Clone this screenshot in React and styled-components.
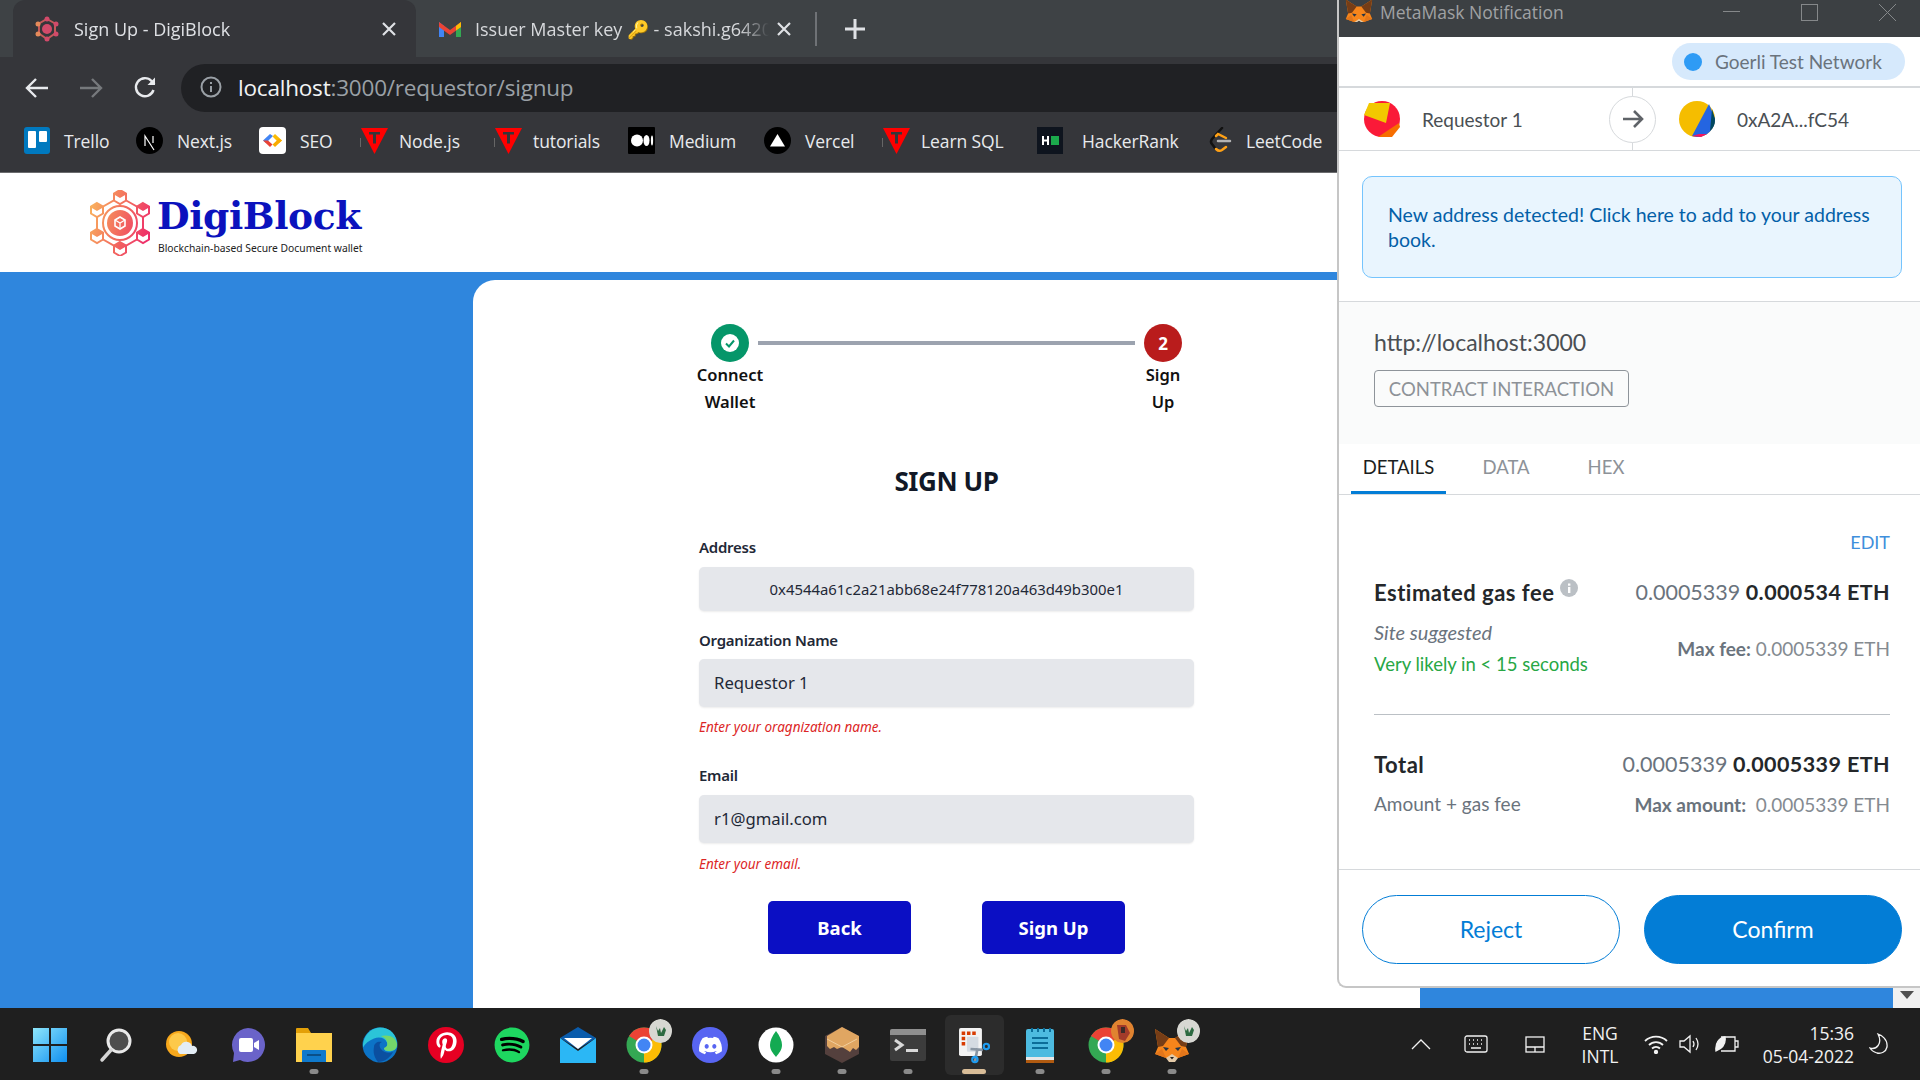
import React from "react"
import styled, { createGlobalStyle } from "styled-components"
import { FaDiscord, FaPinterestP, FaSpotify } from "react-icons/fa"

const GlobalStyle = createGlobalStyle`
  html, body { margin: 0; padding: 0; background: #fff; }
  * { box-sizing: border-box; }
`

const Desktop = styled.div`
  position: relative;
  width: 1920px;
  height: 1080px;
  overflow: hidden;
  display: flex;
  flex-direction: column;
  font-family: "Open Sans", sans-serif;
`

/* ---------- browser chrome ---------- */
const Chrome = styled.div`
  height: 173px;
  background: #35363a;
  border-bottom: 1px solid #6b6c6e;
  flex-shrink: 0;
`
const TabStrip = styled.div`
  height: 57px;
  background: #3e4245;
  display: flex;
  padding-left: 13px;
  align-items: stretch;
`
const Tab = styled.div`
  width: ${p => p.$w}px;
  display: flex;
  align-items: center;
  padding: 0 ${p => p.$right}px 0 22px;
  border-top-left-radius: 12px;
  border-top-right-radius: 12px;
  background: ${p => (p.$active ? "#35363a" : "transparent")};
  color: ${p => (p.$active ? "#dfe1e5" : "#d7d9dc")};
  font-size: 18px;
`
const TabTitle = styled.span`
  flex: 1;
  margin-left: ${p => p.$gap}px;
  margin-right: 8px;
  white-space: nowrap;
  overflow: hidden;
  -webkit-mask-image: linear-gradient(90deg, #000 90%, transparent);
  mask-image: linear-gradient(90deg, #000 90%, transparent);
`
const TabSep = styled.div`
  width: 2px;
  height: 34px;
  align-self: center;
  background: #6f7276;
`
const NewTab = styled.div`
  margin-left: 28px;
  display: flex;
  align-items: center;
`
const NavBar = styled.div`
  height: 55px;
  display: flex;
  align-items: center;
  padding: 7px 0 0 25px;
`
const NavButton = styled.div`
  width: ${p => p.$w || 54}px;
  display: flex;
  align-items: center;
`
const UrlBar = styled.div`
  flex: 1;
  height: 48px;
  background: #202124;
  border-radius: 24px 0 0 24px;
  display: flex;
  align-items: center;
  padding: 0 0 2px 19px;
  font-size: 22.5px;
  letter-spacing: -0.2px;
  color: #9aa0a6;
`
const UrlHost = styled.span`
  color: #f1f3f4;
  margin-left: 16px;
`
const BookmarkBar = styled.div`
  height: 60px;
  display: flex;
  align-items: center;
  padding-left: 24px;
  padding-bottom: 3px;
`
const Bookmark = styled.div`
  width: ${p => p.$w}px;
  flex-shrink: 0;
  display: flex;
  align-items: center;
  gap: ${p => p.$gap || 14}px;
  color: #e8eaed;
  font-size: 17.5px;
  letter-spacing: -0.1px;
  white-space: nowrap;
`

/* ---------- page ---------- */
const Viewport = styled.div`
  flex: 1;
  display: flex;
  min-height: 0;
`
const Page = styled.div`
  flex: 1;
  display: flex;
  flex-direction: column;
`
const Scrollbar = styled.div`
  width: 27px;
  background: #f1f1f1;
  display: flex;
  align-items: flex-end;
  justify-content: center;
  padding-bottom: 9px;
`
const SiteHeader = styled.header`
  height: 99px;
  background: #fff;
  display: flex;
  align-items: center;
  padding: 1px 0 0 88px;
  flex-shrink: 0;
`
const LogoText = styled.div`
  margin-left: 5px;
  display: flex;
  flex-direction: column;
`
const LogoName = styled.div`
  font-family: "DejaVu Serif", serif;
  font-weight: 700;
  font-size: 37.6px;
  line-height: 46px;
  letter-spacing: -0.4px;
  color: #0b12bd;
`
const LogoTag = styled.div`
  font-family: "Noto Sans", sans-serif;
  font-size: 10.3px;
  line-height: 12px;
  margin-top: 3px;
  margin-left: 1px;
  color: #222;
  white-space: nowrap;
`
const BlueArea = styled.main`
  flex: 1;
  background: #2f86dd;
  padding: 8px 0 0 473px;
  min-height: 0;
`
const Card = styled.section`
  width: 947px;
  height: 100%;
  background: #fff;
  border-top-left-radius: 22px;
  border-top-right-radius: 22px;
  font-family: "Noto Sans", sans-serif;
  color: #111827;
  padding-top: 44px;
`
const Stepper = styled.div`
  width: 521px;
  margin-left: 213px;
  display: flex;
  align-items: flex-start;
`
const Step = styled.div`
  width: 88px;
  display: flex;
  flex-direction: column;
  align-items: center;
  font-weight: 600;
  font-size: 16.5px;
  line-height: 27px;
  margin-top: 0;
  text-align: center;
  color: #111;
`
const StepDot = styled.div`
  width: 38px;
  height: 38px;
  border-radius: 50%;
  background: ${p => p.$bg};
  color: #fff;
  display: flex;
  align-items: center;
  justify-content: center;
  font-weight: 700;
  font-size: 17px;
  margin-bottom: -1px;
`
const StepLine = styled.div`
  flex: 1;
  height: 4px;
  margin: 17px -16px 0;
  background: #9ca3af;
`
const Heading = styled.h1`
  margin: 48px 0 0;
  text-align: center;
  font-size: 26px;
  line-height: 36px;
  letter-spacing: -0.4px;
  font-weight: 700;
  color: #111827;
`
const Form = styled.form`
  width: 495px;
  margin: 38px 0 0 226px;
  display: flex;
  flex-direction: column;
`
const Label = styled.label`
  font-size: 15px;
  font-weight: 600;
  letter-spacing: -0.25px;
  line-height: 20px;
  color: #1f2937;
  margin-top: ${p => p.$top || 0}px;
  margin-bottom: ${p => p.$bottom || 9}px;
`
const Input = styled.div`
  height: ${p => p.$h || 48}px;
  background: #e5e7eb;
  border-radius: 5px;
  box-shadow: 0 1px 2px rgba(0, 0, 0, 0.08);
  display: flex;
  align-items: center;
  justify-content: ${p => (p.$center ? "center" : "flex-start")};
  padding: 0 15px 1px;
  font-size: ${p => (p.$center ? 14.9 : 16.7)}px;
  color: #1f2937;
`
const ErrorText = styled.p`
  margin: ${p => p.$top || 11}px 0 0;
  font-size: 13.5px;
  line-height: 18px;
  font-style: italic;
  color: #dc2626;
`
const Actions = styled.div`
  display: flex;
  justify-content: center;
  gap: 71px;
  margin-top: 28px;
`
const BlueButton = styled.div`
  width: 143px;
  height: 53px;
  border-radius: 5px;
  background: #0b0fc4;
  color: #fff;
  font-weight: 700;
  font-size: 18.5px;
  display: flex;
  align-items: center;
  justify-content: center;
`

/* ---------- metamask popup ---------- */
const Popup = styled.aside`
  position: absolute;
  left: 1337px;
  top: 0;
  width: 583px;
  height: 988px;
  background: #fff;
  border-left: 2px solid #c6c6c6;
  border-bottom: 2px solid #c6c6c6;
  border-bottom-left-radius: 9px;
  display: flex;
  flex-direction: column;
  font-family: "Lato", sans-serif;
  color: #24272a;
  overflow: hidden;
`
const TitleBar = styled.div`
  height: 37px;
  flex-shrink: 0;
  background: #3c4043;
  display: flex;
  align-items: flex-start;
  padding-left: 6px;
  color: #a0a2a4;
  font-family: "Open Sans", sans-serif;
  font-size: 17.5px;
  line-height: 24px;
`
const FoxClip = styled.div`
  height: 24px;
  overflow: hidden;
  margin-top: -2px;
`
const TitleText = styled.span`
  margin-left: 7px;
  flex: 1;
`
const WinButton = styled.div`
  width: 78px;
  height: 24px;
  padding-left: 12px;
  display: flex;
  align-items: center;
  justify-content: center;
`
const NetworkRow = styled.div`
  height: 51px;
  flex-shrink: 0;
  display: flex;
  justify-content: flex-end;
  align-items: center;
  padding-right: 15px;
  border-bottom: 2px solid #d6d9dc;
`
const NetworkPill = styled.div`
  width: 233px;
  height: 37px;
  border-radius: 19px;
  background: #d6e9fc;
  display: flex;
  align-items: center;
  padding-left: 12px;
  gap: 13px;
  color: #6a737d;
  font-size: 19px;
`
const NetworkDot = styled.span`
  width: 18px;
  height: 18px;
  border-radius: 50%;
  background: #2e9bf5;
`
const AccountRow = styled.div`
  height: 63px;
  flex-shrink: 0;
  display: flex;
  border-bottom: 1px solid #d6d9dc;
  font-size: 19px;
  color: #4a4f54;
`
const AccountSide = styled.div`
  display: flex;
  align-items: center;
  width: ${p => p.$w}px;
  padding-left: ${p => p.$pad}px;
  gap: 22px;
`
const ArrowCircle = styled.div`
  width: 47px;
  height: 47px;
  flex-shrink: 0;
  align-self: center;
  border-radius: 50%;
  border: 1px solid #d6d9dc;
  background: #fff;
  display: flex;
  align-items: center;
  justify-content: center;
`
const ArrowColumn = styled.div`
  width: 1px;
  display: flex;
  justify-content: center;
  background: #d6d9dc;
`
const AlertWrap = styled.div`
  height: 151px;
  flex-shrink: 0;
  padding: 25px 18px 0 23px;
  border-bottom: 1px solid #d6d9dc;
`
const Alert = styled.div`
  height: 102px;
  border: 1px solid #75c4fd;
  border-radius: 10px;
  background: #e9f5fe;
  color: #0360a8;
  padding: 25px 20px 0 25px;
  font-size: 19.5px;
  line-height: 25px;
`
const OriginBlock = styled.div`
  height: 142px;
  flex-shrink: 0;
  background: #fafbfb;
  padding: 26px 0 0 35px;
`
const Origin = styled.div`
  font-size: 23px;
  line-height: 28px;
  color: #4a4f54;
`
const Tag = styled.div`
  margin-top: 14px;
  width: 255px;
  height: 37px;
  border: 1px solid #8e949a;
  border-radius: 4px;
  color: #8d9298;
  font-size: 18.5px;
  display: flex;
  align-items: center;
  justify-content: center;
`
const TabsRow = styled.div`
  height: 51px;
  flex-shrink: 0;
  display: flex;
  padding-left: 12px;
  border-bottom: 1px solid #d6d9dc;
`
const DetailTab = styled.div`
  width: ${p => p.$w}px;
  margin-right: ${p => p.$gap}px;
  height: 50px;
  display: flex;
  align-items: center;
  justify-content: center;
  font-size: 18.5px;
  padding-bottom: 1px;
  color: ${p => (p.$active ? "#1b1e21" : "#8d9298")};
  border-bottom: 3px solid ${p => (p.$active ? "#037dd6" : "transparent")};
`
const Details = styled.div`
  padding: 35px 30px 0 35px;
  display: flex;
  flex-direction: column;
`
const EditLink = styled.div`
  align-self: flex-end;
  font-size: 18px;
  line-height: 24px;
  color: #3f8fdc;
`
const FeeRow = styled.div`
  display: flex;
  justify-content: space-between;
  align-items: center;
  height: 24px;
  margin-top: ${p => p.$top}px;
`
const FeeTitle = styled.div`
  font-size: 22px;
  font-weight: 700;
  letter-spacing: 0.5px;
  color: #24272a;
  display: flex;
  align-items: flex-start;
  gap: 6px;
`
const FeeValue = styled.div`
  font-size: 21.5px;
  color: #6a737d;
  white-space: pre;
`
const Strong = styled.span`
  font-weight: 700;
  letter-spacing: 0.4px;
  color: #24272a;
`
const SubRow = styled.div`
  display: flex;
  justify-content: space-between;
  align-items: center;
  margin-top: 12px;
`
const SubLine = styled.div`
  font-size: ${p => p.$size || 18.5}px;
  line-height: 32px;
  font-style: ${p => (p.$italic ? "italic" : "normal")};
  color: ${p => p.$color || "#6a737d"};
`
const MaxText = styled.div`
  font-size: 19px;
  color: #858b91;
  white-space: pre;
`
const MaxLabel = styled.span`
  font-weight: 700;
  color: #6a737d;
`
const Rule = styled.div`
  height: 1px;
  background: #bbc0c5;
  margin-top: 34px;
`
const Footer = styled.div`
  margin-top: auto;
  height: 117px;
  border-top: 1px solid #d6d9dc;
  padding: 25px 18px 0 23px;
  display: flex;
  gap: 24px;
`
const PillButton = styled.div`
  flex: 1;
  height: 69px;
  border-radius: 35px;
  border: 1px solid #037dd6;
  background: ${p => (p.$primary ? "#037dd6" : "#fff")};
  color: ${p => (p.$primary ? "#fff" : "#037dd6")};
  font-size: 23px;
  padding-bottom: 1px;
  display: flex;
  align-items: center;
  justify-content: center;
`

/* ---------- taskbar ---------- */
const Taskbar = styled.footer`
  height: 72px;
  flex-shrink: 0;
  background: #1f1f1f;
  display: flex;
  padding-left: 17px;
`
const TaskItem = styled.div`
  position: relative;
  width: 66px;
  height: 72px;
  display: flex;
  align-items: flex-start;
  justify-content: center;
  padding-top: 19px;
`
const ActiveBack = styled.div`
  position: absolute;
  left: 4px;
  right: 3px;
  top: 7px;
  bottom: 5px;
  background: #2c2c2c;
  border-radius: 6px;
`
const IconLayer = styled.div`
  position: relative;
  display: flex;
`
const TaskIndicator = styled.div`
  position: absolute;
  left: 50%;
  bottom: 6px;
  transform: translateX(-50%);
  width: ${p => (p.$active ? 24 : 9)}px;
  height: 5px;
  border-radius: 3px;
  background: ${p => (p.$active ? "#d9bd98" : "#8a8a8a")};
`
const Tray = styled.div`
  margin-left: auto;
  display: flex;
  align-items: center;
  color: #f2f2f2;
  font-family: "Open Sans", sans-serif;
  padding-right: 16px;
`
const TrayIcon = styled.div`
  width: ${p => p.$w}px;
  display: flex;
  justify-content: center;
`
const TrayText = styled.div`
  font-size: 17.5px;
  line-height: 23px;
  padding-top: 2px;
  text-align: ${p => p.$align};
  width: ${p => p.$w}px;
  white-space: nowrap;
`
const BadgeWrap = styled.div`
  position: absolute;
  left: 38px;
  top: 11px;
  width: 23px;
  height: 24px;
  border-radius: 50%;
  overflow: hidden;
`
const PinCircle = styled.div`
  width: 36px;
  height: 36px;
  border-radius: 50%;
  background: #e60023;
  display: flex;
  align-items: center;
  justify-content: center;
`
const DiscordCircle = styled(PinCircle)`
  background: #5865f2;
`
const SpotifyWrap = styled.div`
  width: 36px;
  height: 36px;
  background: radial-gradient(circle, #000 60%, transparent 61%);
  display: flex;
`

/* ---------- drawings ---------- */
const DigiLogo = () => {
  const nodes = [[32, 7], [55, 20], [55, 46], [32, 59], [9, 46], [9, 20]]
  return (
    <svg width="64" height="66" viewBox="0 0 64 66">
      <defs>
        <linearGradient id="dg" gradientUnits="userSpaceOnUse" x1="0" y1="20" x2="64" y2="40">
          <stop offset="0" stopColor="#f9b35d" />
          <stop offset="0.55" stopColor="#f2685f" />
          <stop offset="1" stopColor="#ee2a6b" />
        </linearGradient>
      </defs>
      <g fill="none" stroke="url(#dg)" strokeWidth="2">
        <path d="M32 7 55 20V46L32 59 9 46V20Z" />
        <circle cx="32" cy="33" r="17" />
      </g>
      <circle cx="32" cy="33" r="13" fill="url(#dg)" />
      <path d="M32 27l5 3v6l-5 3-5-3v-6z" fill="none" stroke="#fff" strokeWidth="1.6" />
      <path d="M27 30l5 3 5-3M32 33v6" fill="none" stroke="#fff" strokeWidth="1.2" />
      {nodes.map(([x, y]) => (
        <g key={x + "-" + y}>
          <path d={`M${x} ${y - 7}l6 3.5v7l-6 3.5-6-3.5v-7z`} fill="#fff" stroke="url(#dg)" strokeWidth="2" />
          <path d={`M${x - 6} ${y - 3.5}l6 3.5 6-3.5`} fill="none" stroke="url(#dg)" strokeWidth="1.6" />
          <path d={`M${x} ${y - 7}l6 3.5-6 3.5-6-3.5z`} fill="url(#dg)" />
        </g>
      ))}
    </svg>
  )
}

const Fox = ({ size }) => (
  <svg width={size} height={size} viewBox="0 0 36 36">
    <path d="M1 2 15 11H21L35 2 32 20 35 27 24 31H12L1 27 4 20Z" fill="#f6851b" />
    <path d="M1 2 15 11 9 19 4 20Z" fill="#763d16" />
    <path d="M35 2 21 11 27 19 32 20Z" fill="#763d16" />
    <path d="M12 31 18 27 24 31 21 35H15Z" fill="#e4caa8" />
    <path d="M16 30h4l-2 2.5z" fill="#222" />
    <path d="M9 20l6 1-3 3zM27 20l-6 1 3 3z" fill="#233447" />
    <path d="M1 27 12 31 8 22zM35 27 24 31 28 22z" fill="#e2761b" />
  </svg>
)

const ChromeIcon = ({ size }) => (
  <svg width={size} height={size} viewBox="0 0 36 36">
    <circle cx="18" cy="18" r="17.5" fill="#34a853" />
    <path d="M18 .5A17.5 17.5 0 0 1 33.2 9.3L18 18 3 9A17.5 17.5 0 0 1 18 .5z" fill="#ea4335" />
    <path d="M33.2 9.3A17.5 17.5 0 0 1 18 35.5L18 18z" fill="#fbbc04" />
    <circle cx="18" cy="18" r="8.5" fill="#fff" />
    <circle cx="18" cy="18" r="6.5" fill="#4285f4" />
  </svg>
)

const PlantBadge = () => (
  <BadgeWrap>
    <svg width="23" height="24" viewBox="0 0 23 24">
      <circle cx="11.5" cy="12" r="12" fill="#d7d7d2" />
      <path d="M7 7l2 5 2-3 1 5 3-6 2 3-2 6H9z" fill="#2d6a41" />
    </svg>
  </BadgeWrap>
)
const PhotoBadge = () => (
  <BadgeWrap>
    <svg width="23" height="24" viewBox="0 0 23 24">
      <circle cx="11.5" cy="12" r="12" fill="#e08330" />
      <path d="M6 6h9l4 8-5 8-6-2z" fill="#a23b2a" />
      <path d="M10 8h4v6h-4z" fill="#3a2a28" />
    </svg>
  </BadgeWrap>
)

const TriangleMark = () => (
  <svg width="31" height="28" viewBox="0 0 31 28">
    <rect x="0" y="11" width="1" height="9" fill="#666" />
    <path d="M1 1H28L14.5 27Z" fill="#f00" />
    <path d="M9 5h11v2.6h-4v9h-3v-9H9z" fill="#35363a" />
  </svg>
)

const bookmarks = [
  { name: "Trello", w: 112, icon: (
    <svg width="26" height="27" viewBox="0 0 26 27">
      <rect width="26" height="27" rx="3" fill="#0079bf" />
      <rect x="4" y="4" width="8" height="17" rx="1" fill="#fff" />
      <rect x="15" y="4" width="8" height="11" rx="1" fill="#fff" />
    </svg>) },
  { name: "Next.js", w: 123, icon: (
    <svg width="27" height="27" viewBox="0 0 27 27">
      <circle cx="13.5" cy="13.5" r="13.5" fill="#000" />
      <path d="M9 19V9l9 14M17 9v7" fill="none" stroke="#fff" strokeWidth="1.2" />
    </svg>) },
  { name: "SEO", w: 101, icon: (
    <svg width="27" height="27" viewBox="0 0 27 27">
      <rect width="27" height="27" rx="4" fill="#fff" />
      <path d="M11 7 4 13.5 7 16l7-7z" fill="#4285f4" />
      <path d="M4 13.5l7 6.5 2.5-2.5-4.5-4z" fill="#ea4335" />
      <path d="M16 7l7 6.5-3 2.5-6.5-6.5z" fill="#fbbc04" />
      <path d="M23 13.5 16 20l-2.5-2.5 6.5-6z" fill="#f9ab00" />
    </svg>) },
  { name: "Node.js", w: 134, gap: 8, icon: <TriangleMark /> },
  { name: "tutorials", w: 134, gap: 8, icon: <TriangleMark /> },
  { name: "Medium", w: 136, icon: (
    <svg width="27" height="27" viewBox="0 0 27 27">
      <rect width="27" height="27" rx="1" fill="#000" />
      <ellipse cx="9" cy="13.5" rx="6" ry="6" fill="#fff" />
      <ellipse cx="18.5" cy="13.5" rx="3" ry="5.6" fill="#fff" />
      <ellipse cx="24" cy="13.5" rx="1.1" ry="5" fill="#fff" />
    </svg>) },
  { name: "Vercel", w: 118, icon: (
    <svg width="27" height="27" viewBox="0 0 27 27">
      <circle cx="13.5" cy="13.5" r="13.5" fill="#000" />
      <path d="M13.5 7l7.5 12.5H6z" fill="#fff" />
    </svg>) },
  { name: "Learn SQL", w: 155, gap: 8, icon: <TriangleMark /> },
  { name: "HackerRank", w: 171, gap: 19, icon: (
    <svg width="26" height="27" viewBox="0 0 26 27">
      <rect width="26" height="27" fill="#0e141e" />
      <path d="M5 9h2v3.5h3V9h2v9h-2v-3.5H7V18H5z" fill="#fff" />
      <rect x="14" y="9" width="8" height="9" fill="#1ba94c" />
    </svg>) },
  { name: "LeetCode", w: 130, icon: (
    <svg width="24" height="27" viewBox="0 0 24 27">
      <path d="M14 1 4 12q-2 3 0 5l3 4" fill="none" stroke="#111" strokeWidth="2.5" strokeLinecap="round" />
      <path d="M8 22q3 3 6 1l4-3M8 9l2-2 8 4" fill="none" stroke="#ffa116" strokeWidth="2.5" strokeLinecap="round" />
      <path d="M10 14h12" stroke="#b3b3b3" strokeWidth="2.5" strokeLinecap="round" />
    </svg>) },
]

const taskIcons = [
  { key: "start", icon: (
    <svg width="36" height="36" viewBox="0 0 36 36">
      <defs>
        <linearGradient id="wn" x1="0" y1="0" x2="1" y2="1">
          <stop offset="0" stopColor="#8ee6fb" />
          <stop offset="1" stopColor="#0f8ff0" />
        </linearGradient>
      </defs>
      <path d="M1 1h16v16H1zM19 1h16v16H19zM1 19h16v16H1zM19 19h16v16H19z" fill="url(#wn)" />
    </svg>) },
  { key: "search", icon: (
    <svg width="36" height="36" viewBox="0 0 36 36">
      <circle cx="21" cy="14" r="11" fill="#4d4d4d" stroke="#e9e9e9" strokeWidth="3" />
      <path d="M13 23 4 33" stroke="#d5d5d5" strokeWidth="3.5" strokeLinecap="round" />
    </svg>) },
  { key: "weather", icon: (
    <svg width="36" height="36" viewBox="0 0 36 36">
      <circle cx="15" cy="17" r="13" fill="#f7a81c" />
      <circle cx="14" cy="15" r="9" fill="#fdc94a" />
      <path d="M16 27a5 5 0 0 1 1-9 6 6 0 0 1 11 1 4 4 0 0 1 2 8z" fill="#e3edf5" />
    </svg>) },
  { key: "chat", icon: (
    <svg width="36" height="36" viewBox="0 0 36 36">
      <path d="M18 1a17 17 0 1 1-8 32l-7 2 1-9A17 17 0 0 1 18 1z" fill="#6a63c9" />
      <rect x="9" y="11" width="14" height="14" rx="2" fill="#fff" />
      <path d="M24 16l5-3v10l-5-3z" fill="#fff" />
    </svg>) },
  { key: "files", dot: true, icon: (
    <svg width="36" height="36" viewBox="0 0 36 36">
      <path d="M0 2a1 1 0 0 1 1-1h11l3 5h21v29H0z" fill="#e3a008" />
      <path d="M0 6h36v29H0z" fill="#ffd24d" />
      <path d="M6 35V24a1 1 0 0 1 1-1h22a1 1 0 0 1 1 1v11z" fill="#0f79cc" />
      <rect x="11" y="27" width="14" height="2" fill="#0a4f88" />
    </svg>) },
  { key: "edge", icon: (
    <svg width="36" height="36" viewBox="0 0 36 36">
      <circle cx="18" cy="18" r="17.5" fill="#0c73c6" />
      <path d="M1 17C3 5 12 .5 18 .5c10 0 17 7 17 17 0 5-4 7-8 7-3 0-5-1-5-3 3-1 4-3 3-6-2-5-8-6-13-4-5 2-9 5-11 9z" fill="#2bc4d8" />
      <path d="M35 17c0 6-4 7-8 7-3 0-5-1-5-3 3-1 4-3 3-6-1-4-4-5-6-6 8-2 15 1 16 8z" fill="#74d66a" />
      <path d="M12 20c0-4 4-6 8-5-3 1-3 4-1 7s7 5 12 3c-3 6-9 10-15 10C12 30 11 25 12 20z" fill="#0b4fa0" />
    </svg>) },
  { key: "pin", icon: <PinCircle><FaPinterestP size={27} color="#fff" /></PinCircle> },
  { key: "spotify", icon: <SpotifyWrap><FaSpotify size={36} color="#1ed760" /></SpotifyWrap> },
  { key: "mail", icon: (
    <svg width="36" height="36" viewBox="0 0 36 36">
      <path d="M0 11 18 0l18 11-18 11z" fill="#0a5cac" />
      <path d="M4 11h28L18 22z" fill="#fff" />
      <path d="M0 11v25h36V11L18 24z" fill="#2bb7f5" />
    </svg>) },
  { key: "chrome", dot: true, icon: <ChromeIcon size={36} />, badge: <PlantBadge /> },
  { key: "discord", icon: <DiscordCircle><FaDiscord size={25} color="#fff" /></DiscordCircle> },
  { key: "mongo", dot: true, icon: (
    <svg width="36" height="36" viewBox="0 0 36 36">
      <circle cx="18" cy="18" r="17.5" fill="#fff" />
      <path d="M18 4c4 5 6 10 6 14 0 5-3 8-6 12-3-4-6-7-6-12 0-4 2-9 6-14z" fill="#13aa52" />
    </svg>) },
  { key: "box", dot: true, icon: (
    <svg width="36" height="36" viewBox="0 0 36 36">
      <path d="M18 0 35 9v18L18 36 1 27V9z" fill="#54403d" />
      <path d="M18 0 35 9v11l-3 3-3-2-3 4-3-2-5-3-5 2-3-2-4 2-3-3V9z" fill="#e0a662" />
      <path d="M3 12l15 8 15-8" fill="none" stroke="#f2cf9d" strokeWidth="1" />
    </svg>) },
  { key: "terminal", dot: true, icon: (
    <svg width="36" height="36" viewBox="0 0 36 36">
      <rect y="2" width="36" height="32" rx="2" fill="#3c3c3c" />
      <path d="M0 4a2 2 0 0 1 2-2h34v6H0z" fill="#8f8f8f" />
      <path d="M5 13l7 5-7 5" fill="none" stroke="#d9d9d9" strokeWidth="3" />
      <rect x="16" y="22" width="12" height="3" fill="#d9d9d9" />
    </svg>) },
  { key: "snip", active: true, icon: (
    <svg width="32" height="37" viewBox="0 0 36 42">
      <rect x="1" y="1" width="26" height="32" rx="2" fill="#f3f3f3" />
      <path d="M4 5h4v4H4zM10 5h4v4h-4zM16 5h4v4h-4zM4 11h4v4H4zM4 17h4v4H4z" fill="#d83b01" />
      <rect x="10" y="11" width="13" height="17" rx="1" fill="#d5dbe2" />
      <path d="M19 40 22 24M14 25l14 1" stroke="#8a96a3" strokeWidth="3" />
      <circle cx="32" cy="22" r="3" fill="none" stroke="#1f9cf0" strokeWidth="2.5" />
      <circle cx="19" cy="37" r="3" fill="none" stroke="#1f9cf0" strokeWidth="2.5" />
    </svg>) },
  { key: "notes", dot: true, icon: (
    <svg width="36" height="36" viewBox="0 0 36 36">
      <rect x="4" y="2" width="28" height="33" rx="2" fill="#4dbbe0" />
      <rect x="4" y="30" width="28" height="3" fill="#e8e8e8" />
      <rect x="4" y="33" width="28" height="3" fill="#b05a10" />
      <path d="M10 11h16M10 16h16M10 21h16" stroke="#0b6d99" strokeWidth="2" />
      <path d="M10 1v4M16 1v4M22 1v4M28 1v4" stroke="#0b6d99" strokeWidth="2" />
    </svg>) },
  { key: "chrome2", dot: true, icon: <ChromeIcon size={36} />, badge: <PhotoBadge /> },
  { key: "fox", dot: true, icon: <Fox size={36} />, badge: <PlantBadge /> },
]

const Identicon = ({ kind }) =>
  kind === "red" ? (
    <svg width="36" height="36" viewBox="0 0 36 36">
      <circle cx="18" cy="18" r="18" fill="#fa1a38" />
      <path d="M0 14 5 2 H26 L22 22z" fill="#f2c800" />
      <path d="M14 36 L35 22 36 26 28 36z" fill="#f76e00" />
    </svg>
  ) : (
    <svg width="36" height="36" viewBox="0 0 36 36">
      <circle cx="18" cy="18" r="18" fill="#f5bd00" />
      <path d="M30 3 36 18C36 28 28 36 18 36l-5-1z" fill="#2465e1" />
      <path d="M33 8 36 18c0 5-1 8-5 12z" fill="#03485e" />
      <path d="M13 35l7-2 8 0-6 3z" fill="#f5145f" />
    </svg>
  )

const Stroke = ({ w, h, children }) => (
  <svg width={w} height={h} viewBox={`0 0 ${w} ${h}`} fill="none" stroke="currentColor" strokeWidth="1.3">
    {children}
  </svg>
)

export default function App() {
  return (
    <Desktop>
      <GlobalStyle />
      <Chrome>
        <TabStrip>
          <Tab $active $w={403} $right={20}>
            <svg width="24" height="26" viewBox="0 0 24 26">
              <path d="M12 3l8 4.5v10L12 23 4 17.5v-10z" fill="none" stroke="#c45a5a" strokeWidth="2" />
              <circle cx="12" cy="13" r="5" fill="#d24a6a" />
              <circle cx="12" cy="3" r="2.5" fill="#d24a6a" />
              <circle cx="12" cy="23" r="2.5" fill="#d24a6a" />
              <circle cx="3" cy="8" r="2.5" fill="#e58a5a" />
              <circle cx="21" cy="8" r="2.5" fill="#d24a6a" />
              <circle cx="3" cy="18" r="2.5" fill="#e58a5a" />
              <circle cx="21" cy="18" r="2.5" fill="#d24a6a" />
            </svg>
            <TabTitle $gap={15}>Sign Up - DigiBlock</TabTitle>
            <svg width="14" height="14" viewBox="0 0 14 14" stroke="#dfe1e5" strokeWidth="2.2">
              <path d="M1 1l12 12M13 1 1 13" />
            </svg>
          </Tab>
          <Tab $w={399} $right={24}>
            <svg width="24" height="20" viewBox="0 0 24 20">
              <path d="M1 18V3l5 4v11z" fill="#4285f4" />
              <path d="M23 18V3l-5 4v11z" fill="#34a853" />
              <path d="M1 3 12 11 23 3v5l-11 8L1 8z" fill="#ea4335" />
              <path d="M18 7l5-4v5l-5 3.5z" fill="#fbbc04" />
            </svg>
            <TabTitle $gap={13}>Issuer Master key 🔑 - sakshi.g6420@gmail.com</TabTitle>
            <svg width="14" height="14" viewBox="0 0 14 14" stroke="#dfe1e5" strokeWidth="2.2">
              <path d="M1 1l12 12M13 1 1 13" />
            </svg>
          </Tab>
          <TabSep />
          <NewTab>
            <svg width="20" height="20" viewBox="0 0 20 20" stroke="#dfe1e5" strokeWidth="3">
              <path d="M10 0v20M0 10h20" />
            </svg>
          </NewTab>
        </TabStrip>
        <NavBar>
          <NavButton>
            <svg width="24" height="22" viewBox="0 0 24 22" fill="none" stroke="#e8eaed" strokeWidth="2.4">
              <path d="M23 11H3M11 2 2 11l9 9" />
            </svg>
          </NavButton>
          <NavButton>
            <svg width="24" height="22" viewBox="0 0 24 22" fill="none" stroke="#76797c" strokeWidth="2.4">
              <path d="M1 11h20M13 2l9 9-9 9" />
            </svg>
          </NavButton>
          <NavButton $w={48}>
            <svg width="24" height="24" viewBox="0 0 24 24" fill="none" stroke="#e8eaed" strokeWidth="2.4">
              <path d="M20.5 14a9 9 0 1 1-2-9l3 3" />
              <path d="M22 1.5V9h-7.5z" fill="#e8eaed" stroke="none" />
            </svg>
          </NavButton>
          <UrlBar>
            <svg width="22" height="22" viewBox="0 0 22 22" fill="none" stroke="#9aa0a6" strokeWidth="2">
              <circle cx="11" cy="11" r="9.5" />
              <path d="M11 10v6M11 6v2" />
            </svg>
            <UrlHost>localhost</UrlHost>:3000/requestor/signup
          </UrlBar>
        </NavBar>
        <BookmarkBar>
          {bookmarks.map(b => (
            <Bookmark key={b.name} $w={b.w} $gap={b.gap}>
              {b.icon}
              <span>{b.name}</span>
            </Bookmark>
          ))}
        </BookmarkBar>
      </Chrome>

      <Viewport>
        <Page>
          <SiteHeader>
            <DigiLogo />
            <LogoText>
              <LogoName>DigiBlock</LogoName>
              <LogoTag>Blockchain-based Secure Document wallet</LogoTag>
            </LogoText>
          </SiteHeader>
          <BlueArea>
            <Card>
              <Stepper>
                <Step>
                  <StepDot $bg="#059669">
                    <svg width="20" height="20" viewBox="0 0 20 20">
                      <circle cx="10" cy="10" r="9" fill="#fff" />
                      <path d="M6 10.5l3 3 5-6" fill="none" stroke="#059669" strokeWidth="2" />
                    </svg>
                  </StepDot>
                  Connect<br />Wallet
                </Step>
                <StepLine />
                <Step>
                  <StepDot $bg="#b91c1c">2</StepDot>
                  Sign<br />Up
                </Step>
              </Stepper>
              <Heading>SIGN UP</Heading>
              <Form>
                <Label $bottom={10}>Address</Label>
                <Input $center $h={44}>0x4544a61c2a21abb68e24f778120a463d49b300e1</Input>
                <Label $top={19}>Organization Name</Label>
                <Input>Requestor 1</Input>
                <ErrorText>Enter your oragnization name.</ErrorText>
                <Label $top={29} $bottom={10}>Email</Label>
                <Input>r1@gmail.com</Input>
                <ErrorText $top={12}>Enter your email.</ErrorText>
                <Actions>
                  <BlueButton>Back</BlueButton>
                  <BlueButton>Sign Up</BlueButton>
                </Actions>
              </Form>
            </Card>
          </BlueArea>
        </Page>
        <Scrollbar>
          <svg width="14" height="8" viewBox="0 0 14 8">
            <path d="M0 0h14L7 8z" fill="#505050" />
          </svg>
        </Scrollbar>
      </Viewport>

      <Taskbar>
        {taskIcons.map(t => (
          <TaskItem key={t.key}>
            {t.active && <ActiveBack />}
            <IconLayer>{t.icon}</IconLayer>
            {t.badge}
            {(t.dot || t.active) && <TaskIndicator $active={t.active} />}
          </TaskItem>
        ))}
        <Tray>
          <TrayIcon $w={44}>
            <Stroke w={20} h={12}><path d="M1 11 10 2l9 9" /></Stroke>
          </TrayIcon>
          <TrayIcon $w={66}>
            <Stroke w={24} h={18}>
              <rect x="1" y="1" width="22" height="16" rx="2" />
              <path d="M5 5h1M9 5h1M13 5h1M17 5h1M5 9h1M9 9h1M13 9h1M17 9h1M7 13h10" />
            </Stroke>
          </TrayIcon>
          <TrayIcon $w={52}>
            <Stroke w={20} h={17}>
              <rect x="1" y="1" width="18" height="15" />
              <path d="M1 11h18M10 11v5" />
            </Stroke>
          </TrayIcon>
          <TrayText $align="center" $w={78}>ENG<br />INTL</TrayText>
          <TrayIcon $w={34}>
            <Stroke w={24} h={20}>
              <path d="M1 7a16 16 0 0 1 22 0M5 11a10 10 0 0 1 14 0M8 14.5a6 6 0 0 1 8 0" strokeWidth="1.8" />
              <circle cx="12" cy="18" r="1.5" fill="currentColor" />
            </Stroke>
          </TrayIcon>
          <TrayIcon $w={34}>
            <Stroke w={22} h={20}>
              <path d="M1 7h4l6-5v16l-6-5H1zM14 7q2 3 0 6M17 4q4 6 0 12" />
            </Stroke>
          </TrayIcon>
          <TrayIcon $w={40}>
            <Stroke w={24} h={18}>
              <path d="M6 2h14v14H6M20 6h3v6h-3" />
              <path d="M1 16C0 8 4 3 10 2c1 6-2 11-9 14z" fill="currentColor" />
            </Stroke>
          </TrayIcon>
          <TrayText $align="right" $w={107}>15:36<br />05-04-2022</TrayText>
          <TrayIcon $w={50}>
            <Stroke w={20} h={22}>
              <path d="M9 1c3 1 10 5 9 13-1 5-6 7-10 6-3-1-6-3-7-5 6 2 13-4 8-14z" />
            </Stroke>
          </TrayIcon>
        </Tray>
      </Taskbar>

      <Popup>
        <TitleBar>
          <FoxClip><Fox size={28} /></FoxClip>
          <TitleText>MetaMask Notification</TitleText>
          <WinButton>
            <svg width="17" height="2"><rect width="17" height="1" fill="#85888a" /></svg>
          </WinButton>
          <WinButton>
            <svg width="17" height="17" viewBox="0 0 17 17"><rect x=".5" y=".5" width="16" height="16" fill="none" stroke="#85888a" /></svg>
          </WinButton>
          <WinButton>
            <svg width="17" height="17" viewBox="0 0 17 17"><path d="M0 0l17 17M17 0 0 17" stroke="#85888a" /></svg>
          </WinButton>
        </TitleBar>
        <NetworkRow>
          <NetworkPill>
            <NetworkDot />
            Goerli Test Network
          </NetworkPill>
        </NetworkRow>
        <AccountRow>
          <AccountSide $w={293} $pad={25}>
            <Identicon kind="red" />
            Requestor 1
          </AccountSide>
          <ArrowColumn>
            <ArrowCircle>
              <svg width="22" height="20" viewBox="0 0 22 20" fill="none" stroke="#5f6368" strokeWidth="2.6">
                <path d="M1 10h19M12 2l8 8-8 8" />
              </svg>
            </ArrowCircle>
          </ArrowColumn>
          <AccountSide $w={280} $pad={46}>
            <Identicon kind="blue" />
            0xA2A...fC54
          </AccountSide>
        </AccountRow>
        <AlertWrap>
          <Alert>New address detected! Click here to add to your address book.</Alert>
        </AlertWrap>
        <OriginBlock>
          <Origin>http://localhost:3000</Origin>
          <Tag>CONTRACT INTERACTION</Tag>
        </OriginBlock>
        <TabsRow>
          <DetailTab $active $w={95} $gap={32}>DETAILS</DetailTab>
          <DetailTab $w={56} $gap={52}>DATA</DetailTab>
          <DetailTab $w={40} $gap={0}>HEX</DetailTab>
        </TabsRow>
        <Details>
          <EditLink>EDIT</EditLink>
          <FeeRow $top={26}>
            <FeeTitle>
              Estimated gas fee
              <svg width="18" height="18" viewBox="0 0 18 18">
                <circle cx="9" cy="9" r="9" fill="#bbc0c5" />
                <rect x="8" y="8" width="2.4" height="6" fill="#fff" />
                <rect x="8" y="4.5" width="2.4" height="2.2" fill="#fff" />
              </svg>
            </FeeTitle>
            <FeeValue>0.0005339 <Strong>0.000534 ETH</Strong></FeeValue>
          </FeeRow>
          <SubRow>
            <div>
              <SubLine $italic $size={20}>Site suggested</SubLine>
              <SubLine $color="#28a745">Very likely in &lt; 15 seconds</SubLine>
            </div>
            <MaxText><MaxLabel>Max fee:</MaxLabel> 0.0005339 ETH</MaxText>
          </SubRow>
          <Rule />
          <FeeRow $top={37}>
            <FeeTitle>Total</FeeTitle>
            <FeeValue>0.0005339 <Strong>0.0005339 ETH</Strong></FeeValue>
          </FeeRow>
          <FeeRow $top={16}>
            <SubLine $size={19}>Amount + gas fee</SubLine>
            <MaxText><MaxLabel>Max amount:</MaxLabel>  0.0005339 ETH</MaxText>
          </FeeRow>
        </Details>
        <Footer>
          <PillButton>Reject</PillButton>
          <PillButton $primary>Confirm</PillButton>
        </Footer>
      </Popup>
    </Desktop>
  )
}
